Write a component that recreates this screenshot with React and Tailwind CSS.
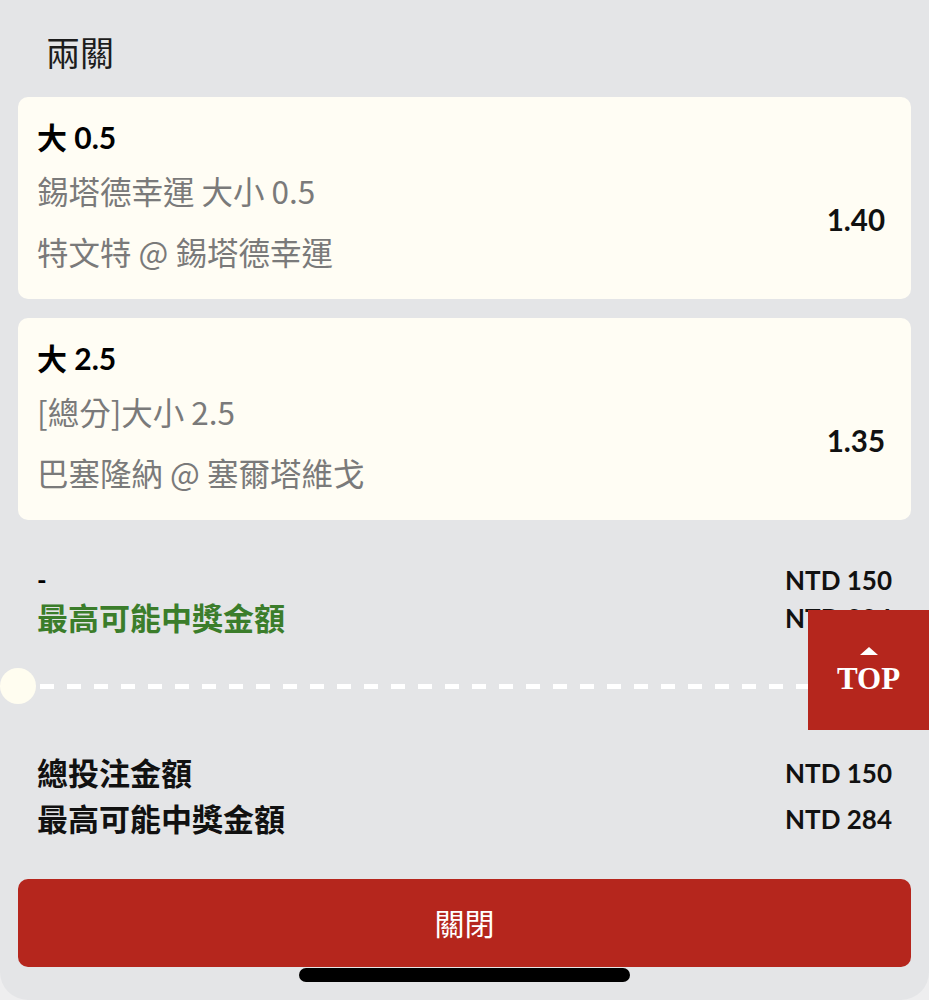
import React from 'react';

const bets = [
  { pick: '大 0.5', market: '錫塔德幸運 大小 0.5', match: '特文特 @ 錫塔德幸運', odds: '1.40' },
  { pick: '大 2.5', market: '[總分]大小 2.5', match: '巴塞隆納 @ 塞爾塔維戈', odds: '1.35' },
];

function BetCard({ bet }) {
  return (
    <div className="bg-[#fffdf4] rounded-[10px] pl-[19px] pr-[26px] pt-[20px] pb-[28px]">
      <div className="text-[30px] leading-[40px] font-bold text-black">{bet.pick}</div>
      <div className="flex items-center justify-between mt-[13px]">
        <div className="text-[31.5px] text-[#7a7a7a] font-['Noto_Sans_CJK_TC',sans-serif]">
          <div className="leading-[40px]">{bet.market}</div>
          <div className="leading-[40px] mt-[21px]">{bet.match}</div>
        </div>
        <div className="text-[29.5px] font-bold text-[#111]">{bet.odds}</div>
      </div>
    </div>
  );
}

export default function App() {
  return (
    <div className="relative h-[1000px] overflow-hidden bg-[#eeeeef] font-['Lato','Noto_Sans_CJK_TC',sans-serif]">
      <div className="h-[1000px] bg-[#e4e5e7] rounded-b-[28px] px-[18px]">
        <div className="pt-[29px] pl-[28px] text-[34px] leading-[48px] text-[#1c1c1c]">兩關</div>

        <div className="mt-[20px] flex flex-col gap-[19px]">
          {bets.map((bet) => (
            <BetCard key={bet.odds} bet={bet} />
          ))}
        </div>

        {/* per-leg summary */}
        <div className="mt-[41px] flex justify-between px-[19px]">
          <div className="font-bold">
            <div className="text-[26px] leading-[38px] text-black">-</div>
            <div className="text-[31px] leading-[38px] text-[#3b7d2b]">最高可能中獎金額</div>
          </div>
          <div className="text-[26px] leading-[38px] font-bold text-[#111] text-right">
            <div>NTD 150</div>
            <div>NTD 284</div>
          </div>
        </div>

        {/* ticket divider */}
        <div className="-mx-[18px] mt-[31px] flex items-center gap-[4px]">
          <div className="w-9 h-9 rounded-full bg-[#fffdf0] shrink-0" />
          <div className="flex-1 h-[5px] bg-[repeating-linear-gradient(90deg,#ffffff_0_14px,transparent_14px_27px)]" />
          <div className="w-9 h-9 rounded-full bg-[#fffdf0] shrink-0" />
        </div>

        <div className="mt-[46px] flex justify-between px-[19px] font-bold text-[#111]">
          <div className="text-[31px] leading-[46px]">
            <div>總投注金額</div>
            <div>最高可能中獎金額</div>
          </div>
          <div className="text-[26px] leading-[46px] text-right">
            <div>NTD 150</div>
            <div>NTD 284</div>
          </div>
        </div>

        <button className="mt-[37px] w-full h-[88px] rounded-[10px] bg-[#b5261d] text-white text-[30px] flex items-center justify-center">
          關閉
        </button>
      </div>

      {/* back to top */}
      <div className="absolute left-[808px] top-[610px] w-[121px] h-[120px] bg-[#b5261d] flex flex-col items-center justify-center">
        <div className="w-0 h-0 border-l-[9px] border-r-[9px] border-b-[8px] border-l-transparent border-r-transparent border-b-white mb-[10px]" />
        <div className="font-['Liberation_Serif',serif] font-bold text-white text-[31px] leading-[28px]">TOP</div>
      </div>

      <div className="absolute left-[299px] top-[968px] w-[331px] h-[14px] rounded-full bg-black" />
    </div>
  );
}
